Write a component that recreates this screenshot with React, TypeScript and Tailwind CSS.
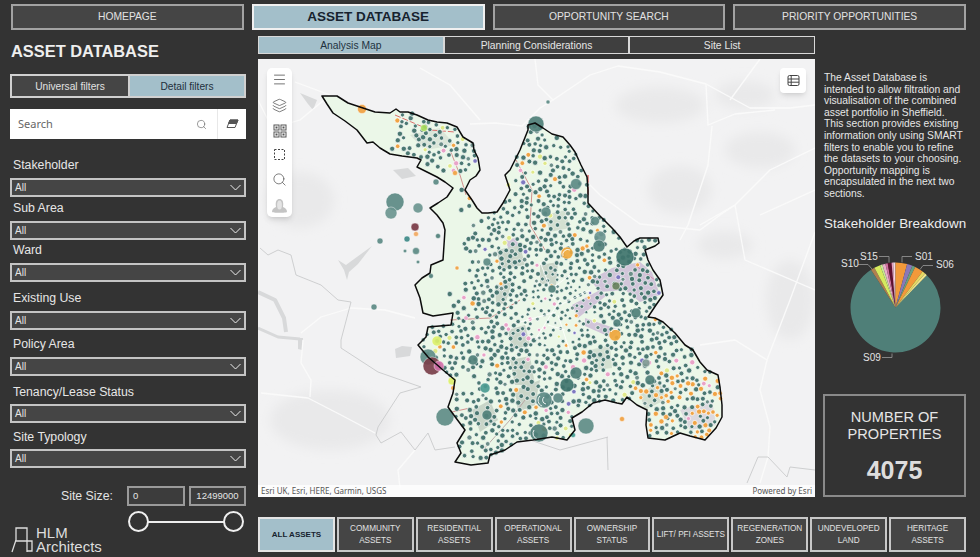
import { Layers, Menu, Search } from 'lucide-react';

const sans = 'font-["Liberation_Sans",Arial,sans-serif]';

// Sheffield boundary, in page pixels (the map svg uses a matching viewBox)
const boundary: [number, number][] = [
  [322, 96], [337, 96], [348, 103], [360, 107], [375, 112], [390, 113], [396, 109], [400, 112], [408, 112], [417, 115],
  [428, 120], [437, 122], [447, 123], [457, 127], [463, 137], [473, 143], [474, 150], [478, 158], [480, 170], [476, 176],
  [470, 180], [465, 190], [472, 200], [477, 208], [482, 213], [488, 213], [497, 212], [503, 203], [510, 190], [505, 175],
  [510, 170], [515, 160], [520, 150], [528, 130], [528, 125], [535, 123], [543, 128], [552, 134], [563, 137], [570, 145],
  [575, 152], [581, 165], [587, 177], [588, 190], [588, 203], [600, 216], [612, 228], [620, 237], [627, 247], [634, 241],
  [640, 238], [650, 238], [658, 238], [659, 243], [655, 246], [645, 250], [648, 260], [653, 270], [660, 280], [663, 295],
  [656, 305], [648, 317], [655, 318], [663, 322], [675, 333], [685, 345], [693, 350], [700, 362], [707, 370], [718, 375],
  [720, 387], [722, 405], [722, 417], [716, 428], [705, 440], [690, 436], [680, 433], [665, 440], [648, 438], [646, 425],
  [647, 410], [637, 405], [627, 397], [622, 404], [617, 403], [605, 400], [593, 403], [582, 412], [572, 418], [575, 430],
  [567, 440], [552, 437], [533, 440], [517, 442], [505, 450], [490, 455], [488, 463], [471, 465], [455, 462], [461, 453],
  [457, 443], [465, 430], [456, 418], [448, 407], [453, 393], [455, 380], [443, 370], [428, 357], [418, 345], [426, 337],
  [428, 327], [451, 325], [453, 313], [433, 316], [423, 313], [420, 298], [415, 285], [422, 278], [430, 273], [431, 265],
  [443, 260], [445, 230], [443, 223], [437, 215], [430, 208], [438, 203], [447, 197], [453, 188], [445, 182], [437, 177],
  [427, 172], [417, 167], [421, 160], [417, 158], [402, 156], [390, 154], [380, 148], [373, 142], [367, 143], [357, 130],
  [345, 121], [333, 113], [327, 104],
];

const inside = (x: number, y: number) => {
  let hit = false;
  for (let i = 0, j = boundary.length - 1; i < boundary.length; j = i++) {
    const [xi, yi] = boundary[i];
    const [xj, yj] = boundary[j];
    if (yi > y !== yj > y && x < ((xj - xi) * (y - yi)) / (yj - yi) + xi) hit = !hit;
  }
  return hit;
};

// how likely a cluster of sites is at a point of the map
function density(x: number, y: number) {
  if (y < 165 && x < 480) return x < 398 ? 0 : 0.8;
  if (y < 320 && x < 495) return Math.max(0.03, Math.min(1, (x - 468) / 28));
  if (x < 490) return 0.55;
  if (y < 215) return 0.7;
  return 1;
}

function makeDots() {
  let seed = 4075;
  const rand = () => {
    seed = (seed * 1664525 + 1013904223) % 4294967296;
    return seed / 4294967296;
  };
  const dots: { x: number; y: number; r: number; c: string }[] = [];
  const add = (x: number, y: number) => {
    if (!inside(x, y)) return;
    if (dots.some((d) => Math.hypot(d.x - x, d.y - y) < 4.6)) return;
    const t = rand();
    let c = '#4a7872';
    if (t > 0.965) c = '#f0a445';
    else if (t > 0.94) c = '#e9a3c8';
    else if (t > 0.915) c = '#dfe98a';
    else if (t > 0.905) c = '#7d78c0';
    else if (t > 0.85) c = '#6d8f8a';
    if (x > 640 && y > 370 && rand() > 0.72) c = '#f0a445';
    const nearCentre = Math.hypot(x - 558, y - 310) < 38;
    dots.push({ x, y, r: (nearCentre ? 1.5 : 2) + rand() * 0.7, c });
  };
  for (let i = 0; i < 2600 && dots.length < 1450; i++) {
    const cx = 322 + rand() * 400;
    const cy = 96 + rand() * 370;
    if (!inside(cx, cy) || rand() > density(cx, cy)) continue;
    const radius = 4 + rand() * 8;
    const count = 3 + Math.floor(rand() * 8);
    const start = rand() * Math.PI * 2;
    const sweep = Math.PI * (0.8 + rand() * 1.2);
    for (let j = 0; j < count; j++) {
      const a = start + (sweep * j) / count;
      add(cx + Math.cos(a) * radius + (rand() - 0.5) * 1.5, cy + Math.sin(a) * radius + (rand() - 0.5) * 1.5);
    }
  }
  return dots;
}

const dots = makeDots();

const bigDots: [number, number, number, string][] = [
  [536, 124, 8, '#4f7f78'], [362, 109, 4.5, '#f0a040'], [424, 128, 3.5, '#a8dc5c'], [395, 202, 9, '#5c8a84'],
  [391, 213, 6, '#6d9690'], [418, 208, 5, '#6d9690'], [415, 227, 4, '#7a3a45'], [416, 234, 2.5, '#f2a860'],
  [436, 182, 3, '#5c8a84'], [455, 173, 2.5, '#f0a040'], [625, 257, 9, '#3f746c'], [546, 212, 5, '#5c8a84'],
  [576, 184, 5.5, '#5c8a84'], [595, 221, 4.5, '#5c8a84'], [600, 237, 6, '#6d9690'], [599, 246, 6, '#4f7f78'],
  [567, 253, 6, '#f0a83c'], [616, 286, 4, '#66805c'], [552, 289, 4, '#4f7f78'], [636, 313, 5, '#4f7f78'],
  [617, 323, 4, '#4f7f78'], [615, 335, 6, '#f0a83c'], [567, 385, 7, '#3f746c'], [558, 398, 5, '#5c8a84'],
  [544, 400, 8, '#5c8a84'], [539, 433, 9, '#4f7f78'], [586, 426, 8, '#5f8d87'], [445, 417, 9, '#5f8d87'],
  [487, 415, 5, '#4f7f78'], [485, 388, 5, '#4a9a90'], [473, 360, 5, '#4f7f78'], [428, 357, 8, '#5f8d87'],
  [432, 366, 9, '#7a3f4a'], [439, 366, 5, '#d070a8'], [437, 341, 5, '#dcf06a'], [452, 381, 4, '#dcf06a'],
  [576, 373, 6, '#4f7f78'], [650, 380, 5, '#4f7f78'], [646, 363, 4, '#7f9a94'], [487, 262, 4, '#5c8a84'],
  [380, 241, 3, '#5c8a84'], [374, 307, 3, '#5c8a84'], [416, 251, 3.5, '#5c8a84'], [407, 239, 3, '#3f8a88'],
  [548, 102, 2, '#5c8a84'], [405, 251, 1.8, '#5c8a84'], [418, 262, 1.8, '#5c8a84'], [438, 236, 2.5, '#4f7f78'],
  [431, 276, 2.4, '#4f7f78'], [457, 268, 2, '#f0a040'], [466, 318, 2.2, '#e9a3c8'], [453, 388, 2.2, '#f0a040'],
  [622, 419, 2.5, '#f0a040'], [666, 417, 2.5, '#f0a040'], [573, 435, 2.5, '#3f9a90'],
];

function pieSlice(start: number, end: number) {
  const r = 45;
  const a = ((start - 90) * Math.PI) / 180;
  const b = ((end - 90) * Math.PI) / 180;
  const large = end - start > 180 ? 1 : 0;
  return `M48 48 L${48 + r * Math.cos(a)} ${48 + r * Math.sin(a)} A${r} ${r} 0 ${large} 1 ${48 + r * Math.cos(b)} ${48 + r * Math.sin(b)} Z`;
}

const slices: [number, number, string][] = [
  [44, 327, '#4f7f78'], [327, 332, '#b08050'], [332, 340, '#d6ea5e'], [340, 343, '#c8e890'], [343, 347, '#e8b0c8'],
  [347, 350, '#d070a0'], [350, 355, '#601030'], [355, 357, '#e8a0c0'], [357, 360, '#f4d8e4'], [0, 15, '#f2993a'],
  [15, 22, '#8a78b8'], [22, 26, '#6aa080'], [26, 37, '#f2993a'], [37, 41, '#e8d860'], [41, 44, '#f0e890'],
];

const filters = [
  { label: 'Stakeholder', gap: 'mt-[16px]', inner: 'mt-[5px]' },
  { label: 'Sub Area', gap: 'mt-[1px]', inner: 'mt-[5px]' },
  { label: 'Ward', gap: 'mt-0', inner: 'mt-[5px]' },
  { label: 'Existing Use', gap: 'mt-[6px]', inner: 'mt-[5px]' },
  { label: 'Policy Area', gap: 'mt-[4px]', inner: 'mt-[5px]' },
  { label: 'Tenancy/Lease Status', gap: 'mt-[6px]', inner: 'mt-[4px]' },
  { label: 'Site Typology', gap: 'mt-[4px]', inner: 'mt-[4px]' },
];

const navItems = ['HOMEPAGE', 'ASSET DATABASE', 'OPPORTUNITY SEARCH', 'PRIORITY OPPORTUNITIES'];
const tabs = ['Analysis Map', 'Planning Considerations', 'Site List'];
const assetTabs = [
  ['ALL ASSETS'],
  ['COMMUNITY', 'ASSETS'],
  ['RESIDENTIAL', 'ASSETS'],
  ['OPERATIONAL', 'ASSETS'],
  ['OWNERSHIP', 'STATUS'],
  ['LIFT/ PFI ASSETS'],
  ['REGENERATION', 'ZONES'],
  ['UNDEVELOPED', 'LAND'],
  ['HERITAGE', 'ASSETS'],
];

function MapDrawing() {
  const outline = boundary.map((p) => p.join(',')).join(' ');
  return (
    <svg viewBox="258 59 557 438" width="557" height="438" className="block">
      <defs>
        <filter id="soft">
          <feGaussianBlur stdDeviation="6" />
        </filter>
      </defs>
      <rect x="258" y="59" width="557" height="438" fill="#f2f2f3" />
      {/* hill shading */}
      <g fill="#e9e9ea" filter="url(#soft)">
        <ellipse cx="660" cy="105" rx="45" ry="18" />
        <ellipse cx="745" cy="95" rx="30" ry="14" />
        <ellipse cx="680" cy="190" rx="32" ry="24" />
        <ellipse cx="760" cy="150" rx="35" ry="18" />
        <ellipse cx="330" cy="420" rx="60" ry="30" />
        <ellipse cx="790" cy="300" rx="24" ry="40" />
        <ellipse cx="725" cy="245" rx="28" ry="14" />
        <ellipse cx="300" cy="200" rx="34" ry="28" />
      </g>
      {/* grey water and built-up patches */}
      <g fill="#d8d9da">
        <path d="M300 93 L317 100 L313 110 L308 104 Z" />
        <path d="M393 170 L408 168 L416 176 L402 179 Z" />
        <path d="M395 349 L402 346 L412 347 L410 356 L396 358 Z" />
        <path d="M298 338 L303 338 L302 350 L298 349 Z" />
        <path d="M338 260 L346 265 L350 262 L372 246 L358 264 L349 272 L347 280 L344 270 Z" />
      </g>
      <g fill="none" stroke="#d8d9da" strokeLinejoin="round">
        <path d="M258 292 L275 300 L284 318 L286 332" strokeWidth="4" />
        <path d="M258 328 L278 337 L300 339" strokeWidth="3" />
      </g>
      {/* roads */}
      <g fill="none" stroke="#fbfbfb" strokeWidth="1.3" strokeLinejoin="round" opacity="0.95">
        <path d="M535 59 L538 85 L553 100 L590 75 L618 66 L660 72 L706 84 L750 108 L790 108 L815 105" />
        <path d="M706 84 L708 125 L735 114 L775 110" />
        <path d="M712 126 L708 165 L698 195 L688 225 L680 240" />
        <path d="M815 148 L770 170 L735 205 L720 215 L700 230 L640 224 L600 195 L585 180" />
        <path d="M258 100 L272 128 L300 120 L330 95 L295 82" />
        <path d="M470 124 L495 123 L522 126 L540 108 L553 100" />
        <path d="M480 120 L450 85 L420 68" />
        <path d="M767 360 L760 390 L770 427 L768 457 L760 483" />
        <path d="M700 225 L735 205 L745 260 L815 290" />
        <path d="M815 232 L790 300 L767 360 L735 340 L700 345" />
        <path d="M301 333 L321 317 L351 308 L385 310 L415 318" />
        <path d="M303 340 L301 363 L311 380 L310 397" />
        <path d="M261 393 L308 398 L341 415 L375 433" />
        <path d="M415 450 L398 470 L400 488" />
        <path d="M760 59 L730 100 M815 190 L760 215" />
      </g>
      {/* boundaries of the neighbouring areas */}
      <g fill="none" stroke="#cacbcc" strokeWidth="0.9" strokeLinejoin="round">
        <path d="M260 248 L268 255 L278 250 L291 255 L296 275 L321 285 L338 300 L351 302 L341 340 L341 348 L378 372 L421 387 L400 393 L378 427 L376 435 L381 443 L401 432 L415 450 L428 433 L435 450 L455 447" />
        <path d="M747 483 L758 457 L768 457 L787 477 L790 467 L815 470" />
        <path d="M530 440 L560 450 L608 437 M607 437 L608 470" />
      </g>
      <polygon points={outline} fill="#ebf7e8" />
      {/* land use inside the boundary */}
      <g fill="#cdbcd6" opacity="0.85">
        <path d="M612 268 L640 262 L652 272 L660 295 L640 302 L625 290 L600 292 L590 280 Z" />
        <path d="M505 240 L515 238 L522 250 L510 252 Z" />
        <path d="M572 305 L600 290 L606 296 L578 318 Z" />
        <path d="M585 318 L620 330 L612 338 L585 326 Z" />
        <path d="M680 410 L712 400 L716 425 L690 430 Z" opacity="0.6" />
      </g>
      <g fill="#c9d5c8">
        <path d="M497 250 L520 245 L525 265 L500 270 Z" />
        <path d="M540 265 L558 262 L556 285 L540 284 Z" />
        <path d="M508 330 L525 325 L530 345 L512 350 Z" />
        <path d="M510 360 L530 356 L535 385 L515 385 Z" />
        <path d="M472 410 L490 400 L498 420 L480 432 Z" />
        <path d="M515 390 L540 380 L535 405 L518 412 Z" />
        <path d="M410 135 L440 128 L455 145 L425 150 Z" opacity="0.5" />
        <path d="M640 395 L660 380 L665 400 L645 410 Z" opacity="0.7" />
        <path d="M495 285 L512 282 L505 305 L496 302 Z" />
        <path d="M590 350 L610 345 L612 368 L595 370 Z" opacity="0.7" />
        <path d="M545 215 L565 210 L570 228 L550 232 Z" opacity="0.7" />
      </g>
      <g fill="none" stroke="#cf8585" strokeWidth="0.9" strokeLinejoin="round">
        <path d="M395 115 L430 130 L455 132" strokeDasharray="6 2" stroke="#d9605f" />
        <path d="M450 150 L460 175 L466 195" />
        <path d="M516 160 L532 190 L530 225 L545 250" />
        <path d="M450 320 L490 318 L520 300" />
        <path d="M452 412 L470 408" />
        <path d="M483 450 L510 420 L525 400" stroke="#b8a0a0" />
        <path d="M588 175 L588 195" stroke="#d9605f" strokeWidth="1.4" />
        <path d="M635 265 L655 280" stroke="#d080a0" />
      </g>
      {dots.map((d, i) => (
        <circle key={i} cx={d.x} cy={d.y} r={d.r} fill={d.c} stroke="#ffffff" strokeOpacity="0.85" strokeWidth="0.8" />
      ))}
      <g fill="none" stroke="#ffffff" strokeWidth="0.9" opacity="0.9">
        <path d="M560 300 L535 340 M560 305 L590 290 M555 300 L540 262 M558 315 L570 352 M556 312 L520 322 M550 290 L570 275 M548 325 L565 330" />
      </g>
      {bigDots.map(([x, y, r, c], i) => (
        <circle key={i} cx={x} cy={y} r={r} fill={c} fillOpacity="0.92" stroke="#ffffff" strokeOpacity="0.6" strokeWidth="0.7" />
      ))}
      {/* rings where sites overlap */}
      <g fill="none" stroke="#ffffff" strokeWidth="0.9">
        <path d="M540 396 A6 6 0 0 0 542 406 M544 397 A4 4 0 0 0 546 404" />
        <path d="M534 430 A6 6 0 0 0 537 439" />
        <path d="M570 250 A5 5 0 0 0 563 256" />
        <path d="M611 332 A5 5 0 0 1 618 330" />
      </g>
      <polygon points={outline} fill="none" stroke="#0c0c0c" strokeWidth="1.5" strokeLinejoin="round" />
    </svg>
  );
}

function MapToolbar() {
  return (
    <div className="absolute left-[9px] top-[9px] flex h-[149px] w-[25px] flex-col items-center justify-between rounded-[5px] bg-white py-[4px] text-[#555] shadow-md">
      <Menu size={15} strokeWidth={1.3} />
      <Layers size={15} strokeWidth={1.2} />
      <svg width="14" height="14" viewBox="0 0 14 14" fill="none" stroke="#555" strokeWidth="1">
        <rect x="1" y="1" width="5" height="5" />
        <rect x="8" y="1" width="5" height="5" />
        <rect x="1" y="8" width="5" height="5" />
        <rect x="8" y="8" width="5" height="5" />
        <rect x="3" y="3" width="1" height="1" fill="#555" />
        <rect x="10" y="3" width="1" height="1" fill="#555" />
        <rect x="3" y="10" width="1" height="1" fill="#555" />
        <rect x="10" y="10" width="1" height="1" fill="#555" />
      </svg>
      <svg width="13" height="13" viewBox="0 0 13 13" fill="none" stroke="#444" strokeWidth="1">
        <rect x="1.5" y="1.5" width="10" height="10" strokeDasharray="2 1.5" />
      </svg>
      <Search size={15} strokeWidth={1.2} />
      <svg width="17" height="15" viewBox="0 0 17 15">
        <path d="M1 14 C1 11 3 10 5 9 C4 3 6 1 8.5 1 C11 1 13 3 12 9 C14 10 16 11 16 14 C16 15 1 15 1 14 Z" fill="#c4c4c4" />
        <ellipse cx="8.5" cy="7" rx="2.4" ry="4.5" fill="#e4e4e4" />
      </svg>
    </div>
  );
}

function FilterSelect() {
  return (
    <div className="flex h-[19px] items-center justify-between border-2 border-[#c4c4c4] bg-[#454545] pl-[3px] pr-[3px] text-[10px] text-[#e4e4e4]">
      <span>All</span>
      <svg width="11" height="7" viewBox="0 0 11 7" fill="none" stroke="#eeeeee" strokeWidth="1">
        <path d="M0.5 1 L5.5 6 L10.5 1" />
      </svg>
    </div>
  );
}

function Sidebar() {
  return (
    <aside className="w-[258px] shrink-0 pl-[10px] pr-[12px]">
      <h1 className="ml-[1px] mt-[11px] text-[16.4px] font-bold leading-[20px] text-[#eeeeee]">ASSET DATABASE</h1>

      <div className="mt-[13px] flex h-[24px] border-2 border-[#d0d0d0] pt-0 text-[10.2px]">
        <div className="flex w-[116px] items-center justify-center bg-[#454545] pt-[1px] text-[#e2e2e2]">Universal filters</div>
        <div className="flex flex-1 items-center justify-center border-l-2 border-[#d0d0d0] bg-[#a3bfca] pt-[1px] text-[#1f2f3c]">Detail filters</div>
      </div>

      <div className="mt-[11px] flex h-[30px] items-center bg-white font-['Noto_Sans',sans-serif] text-[11px] text-[#666]">
        <span className="ml-[8px] flex-1 pt-[1px]">Search</span>
        <Search size={11} strokeWidth={1.4} className="mr-[10px]" />
        <div className="flex h-full w-[29px] items-center justify-center border-l border-[#e8e8e8]">
          <svg width="13" height="10" viewBox="0 0 13 10" fill="none" stroke="#555" strokeWidth="1">
            <path d="M4 1 L12 1 L9 8.5 L1 8.5 Z" />
            <path d="M4 1 L12 1 L10.5 4.5 L2.5 4.5 Z" fill="#555" />
          </svg>
        </div>
      </div>

      {filters.map((f) => (
        <div key={f.label} className={f.gap}>
          <div className="ml-[3px] h-[18px] text-[12.3px] leading-[20px] text-[#e6e6e6]">{f.label}</div>
          <div className={f.inner}>
            <FilterSelect />
          </div>
        </div>
      ))}

      <div className="mt-[18px] flex h-[20px] items-center text-[#e4e4e4]">
        <span className="ml-[51px] w-[66px] text-[12.3px]">Site Size:</span>
        <div className="flex h-full w-[58px] items-center border-2 border-[#9a9a9a] bg-[#3c3c3c] pl-[4px] text-[9.5px]">0</div>
        <div className="ml-[4px] flex h-full w-[57px] items-center justify-center border-2 border-[#9a9a9a] bg-[#3c3c3c] text-[9.5px]">12499000</div>
      </div>

      <div className="flex">
        <div className="mt-[20px] flex items-center text-[#dddddd]">
          <svg width="22" height="26" viewBox="0 0 22 26" fill="none" stroke="#dddddd" strokeWidth="1.3" className="ml-[1px]">
            <path d="M1 25 L5 13 L5 1 L16 1 L16 25 M4 14 L16 14 M16 14 L21 14 L21 24 L16 24" />
          </svg>
          <div className="ml-[3px] w-[70px] text-[15px] leading-[14px]">HLM Architects</div>
        </div>
        <div className="relative ml-auto mr-[2px] mt-[5px] flex h-[21px] w-[116px] items-center justify-between">
          <div className="absolute inset-x-[10px] h-[2px] bg-[#eeeeee]" />
          <div className="relative h-[21px] w-[21px] rounded-full border-2 border-[#f0f0f0] bg-[#333333]" />
          <div className="relative h-[21px] w-[21px] rounded-full border-2 border-[#f0f0f0] bg-[#333333]" />
        </div>
      </div>
    </aside>
  );
}

function RightColumn() {
  return (
    <div className="ml-[8px] flex w-[143px] flex-col">
      <p className="ml-[1px] mt-[42px] w-[142px] text-[10.3px] leading-[11.6px] text-[#e6e6e6]">
        The Asset Database is intended to allow filtration and visualisation of the combined asset portfolio in Sheffield. This section provides existing information only using SMART filters to enable you to refine the datasets to your choosing. Opportunity mapping is encapsulated in the next two sections.
      </p>
      <h2 className="ml-[1px] mt-[15px] whitespace-nowrap text-[13.4px] leading-[18px] text-[#eeeeee]">Stakeholder Breakdown</h2>

      <div className="relative mt-[2px] h-[130px]">
        <svg viewBox="0 0 143 130" width="143" height="130" className="block">
          <g transform="translate(24.5 24.5)">
            {slices.map(([a, b, c]) => (
              <path key={a} d={pieSlice(a, b)} fill={c} />
            ))}
          </g>
          <g fill="none" stroke="#9a9a9a" strokeWidth="0.8">
            <path d="M35 29.5 L45 29.5 L49 34" />
            <path d="M56 21.5 L66 21.5 L66 27.5" />
            <path d="M79 27.5 L79 21.5 L89 21.5" />
            <path d="M97 34.5 L100 30.5 L110 30.5" />
            <path d="M59 122.5 L69 122.5 L69 118.5" />
          </g>
        </svg>
        <div className="absolute inset-0 text-[10px] leading-[12px] text-[#e4e4e4]">
          <span className="absolute left-[18px] top-[23px]">S10</span>
          <span className="absolute left-[37px] top-[16px]">S15</span>
          <span className="absolute left-[92px] top-[16px]">S01</span>
          <span className="absolute left-[113px] top-[24px]">S06</span>
          <span className="absolute left-[40px] top-[117px]">S09</span>
        </div>
      </div>

      <div className="mt-auto flex h-[103px] flex-col items-center border-2 border-[#8a8a8a] pt-[13px] text-[#e6e6e6]">
        <div className="text-center text-[14.6px] leading-[17px]">
          NUMBER OF
          <br />
          PROPERTIES
        </div>
        <div className="mt-[13px] text-[25px] font-bold leading-[28px] text-[#dddddd]">4075</div>
      </div>
    </div>
  );
}

export default function App() {
  return (
    <div className={`h-[557px] w-[980px] overflow-hidden bg-[#333333] ${sans}`}>
      <nav className="grid w-[966px] grid-cols-4 gap-[8px] pl-[11px] pt-[4px]">
        {navItems.map((item, i) =>
          i === 1 ? (
            <div key={item} className="flex h-[26px] items-center justify-center border-2 border-[#f0f0f0] bg-[#a3bfca] text-[13.5px] font-bold text-[#16222e]">
              {item}
            </div>
          ) : (
            <div key={item} className="flex h-[26px] items-center justify-center border-2 border-[#a2a2a2] bg-[#454545] text-[10.3px] text-[#e2e2e2]">
              {item}
            </div>
          ),
        )}
      </nav>

      <div className="flex">
        <Sidebar />
        <div className="w-[708px]">
          <div className="flex h-[467px]">
            <div className="w-[557px]">
              <div className="mt-[6px] grid h-[18px] grid-cols-3 text-[10.3px]">
                {tabs.map((tab, i) => (
                  <div
                    key={tab}
                    className={
                      i === 0
                        ? 'flex items-center justify-center border border-[#d8d8d8] bg-[#a3bfca] pt-[1px] text-[#22323f]'
                        : 'flex items-center justify-center border border-[#d8d8d8] bg-[#3f3f3f] pt-[1px] text-[#e6e6e6]'
                    }
                  >
                    {tab}
                  </div>
                ))}
              </div>
              <div className="relative mt-[5px] h-[438px] w-[557px]">
                <MapDrawing />
                <MapToolbar />
                <div className="absolute right-[9px] top-[9px] flex h-[25px] w-[26px] items-center justify-center rounded-[4px] bg-white shadow-md">
                  <svg width="13" height="13" viewBox="0 0 13 13" fill="none" stroke="#444" strokeWidth="1">
                    <rect x="1" y="1.5" width="11" height="10" rx="1.5" />
                    <path d="M1 5 L12 5 M1 8.2 L12 8.2 M4.2 1.5 L4.2 11.5" />
                  </svg>
                </div>
                <div className="absolute inset-x-0 bottom-0 flex h-[12px] items-center justify-between bg-white/75 px-[3px] font-['Noto_Sans',sans-serif] text-[8px] text-[#555]">
                  <span>Esri UK, Esri, HERE, Garmin, USGS</span>
                  <span>Powered by Esri</span>
                </div>
              </div>
            </div>
            <RightColumn />
          </div>

          <div className="mt-[20px] grid h-[35px] grid-cols-9 gap-[2px]">
            {assetTabs.map((lines, i) => (
              <div
                key={lines[0]}
                className={
                  i === 0
                    ? 'flex flex-col items-center justify-center border-2 border-[#e4e4e4] bg-[#a3bfca] text-[8px] font-bold leading-[12px] text-[#16222e]'
                    : 'flex flex-col items-center justify-center border-2 border-[#c8c8c8] bg-[#454545] text-[8.2px] leading-[12px] text-[#e2e2e2]'
                }
              >
                {lines.map((line) => (
                  <span key={line} className="whitespace-nowrap">
                    {line}
                  </span>
                ))}
              </div>
            ))}
          </div>
        </div>
      </div>
    </div>
  );
}
